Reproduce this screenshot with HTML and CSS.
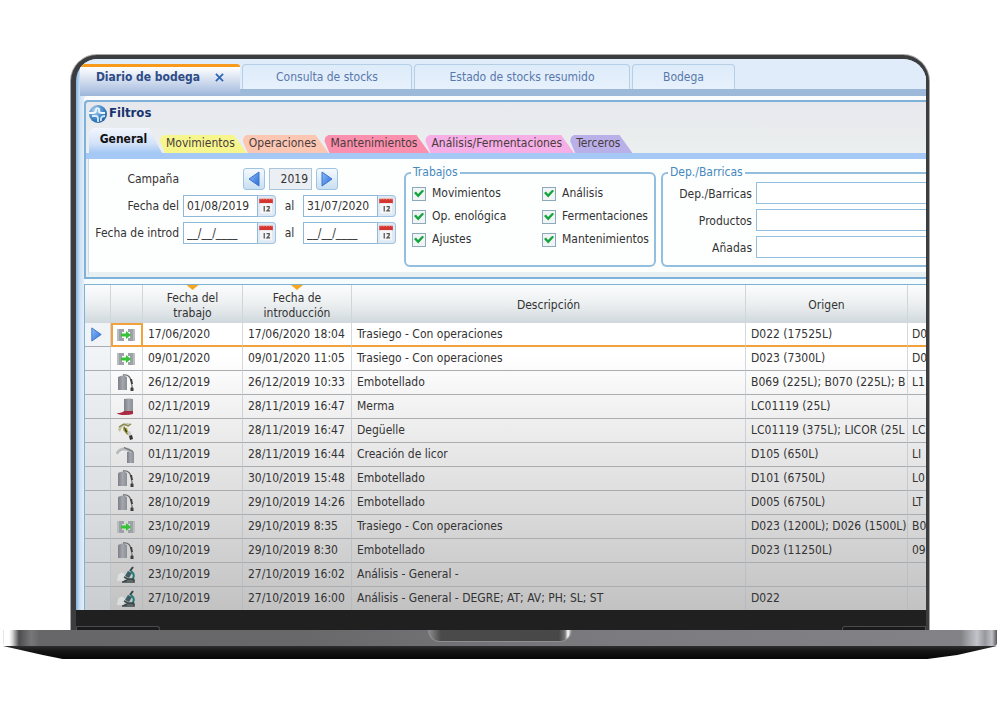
FILE: index.html
```html
<!DOCTYPE html>
<html lang="es">
<head>
<meta charset="utf-8">
<title>Diario de bodega</title>
<link rel="stylesheet" href="styles.css">
</head>
<body>
<svg class="defs" aria-hidden="true">
  <defs>
    <linearGradient id="steel" x1="0" x2="1" y1="0" y2="0"><stop offset="0" stop-color="#7c7f87"/><stop offset=".5" stop-color="#a4a6ae"/><stop offset="1" stop-color="#8d8f97"/></linearGradient>
    <linearGradient id="blue" x1="0" x2="1" y1="0" y2="1"><stop offset="0" stop-color="#8fc0f8"/><stop offset="1" stop-color="#2a6ad8"/></linearGradient>
    <radialGradient id="ball" cx=".35" cy=".3" r=".8"><stop offset="0" stop-color="#b8d8f2"/><stop offset=".5" stop-color="#4a90cc"/><stop offset="1" stop-color="#1c5a9e"/></radialGradient>
    <symbol id="i-transfer" viewBox="0 0 20 18">
      <path d="M1 3h7v3H6v6h2v3H1zM19 3h-7v3h2v6h-2v3h7z" fill="#9da2a6"/>
      <path d="M1 3h2v12H1zM17 3h2v12h-2z" fill="#b9bdc0"/>
      <path d="M5 7.500h5V5l5 4-5 4v-2.500H5z" fill="#35c235"/>
    </symbol>
    <symbol id="i-bottle" viewBox="0 0 20 18">
      <path d="M2 3q5-3 9 0v13H2z" fill="url(#steel)"/>
      <path d="M7 1q7-1 8 6" fill="none" stroke="#6b6d70" stroke-width="1.3"/>
      <path d="M14 5h2l1 5h-2zM14.500 14q1.500-2 3 0v3h-3z" fill="#3c3e40"/>
      <path d="M15.500 10l1 4" stroke="#777" stroke-width="1.2"/>
    </symbol>
    <symbol id="i-loss" viewBox="0 0 20 18">
      <path d="M8 1q5-1 9 0v13H8z" fill="url(#steel)"/>
      <path d="M8 13h9v3q-3 1-8 1-7 0-8-2 5 0 7-2z" fill="#a92a43"/>
    </symbol>
    <symbol id="i-disgorge" viewBox="0 0 20 18">
      <path d="M2 8q1-6 6-6l3-1 5 1-4 1-6 2-2 5z" fill="#c4c0a8"/>
      <path d="M3 5l5-3 4 2 3-2" fill="none" stroke="#878448" stroke-width="1.2"/>
      <path d="M7 5l4 1 2 6-2 1-4-5z" fill="#a9a83a"/>
      <path d="M8 4l5 9-4-4z" fill="#333"/>
      <path d="M11 10l3-1 2 5-3 1z" fill="#c9c9c4"/>
      <path d="M13 14l3-1 1 4-3 1z" fill="#333"/>
    </symbol>
    <symbol id="i-liquor" viewBox="0 0 20 18">
      <path d="M11 6q3-2 7 0v11h-7z" fill="url(#steel)"/>
      <path d="M1 8q2-5 8-5 4 0 7 3" fill="none" stroke="#b8babc" stroke-width="3"/>
      <path d="M3 8l4-3" stroke="#f2f2f2" stroke-width="1.5"/>
      <path d="M8 1.500l9 4" stroke="#6a6c6e" stroke-width="1.3"/>
    </symbol>
    <symbol id="i-scope" viewBox="0 0 20 18">
      <path d="M2 9q4-5 7 0l-1 6H1z" fill="#e6e8e8" opacity=".7"/>
      <path d="M17 1l-3 4" stroke="#364446" stroke-width="2"/>
      <path d="M12 5l4 2-3 5-4-2z" fill="#3c5e62"/>
      <path d="M15 5q5 4 1 9" fill="none" stroke="#1c7c77" stroke-width="2"/>
      <path d="M8 11l4 2h6M7 16l4-2h7v2H6" stroke="#3c484a" stroke-width="1.6" fill="none"/>
    </symbol>
    <symbol id="i-cal" viewBox="0 0 18 22">
      <path d="M1 3h15v5H1z" fill="#d4352f"/>
      <path d="M3 2v2M6 2v2M9 2v2M12 2v2M15 2v2" stroke="#f4b8b0" stroke-width="1"/>
      <path d="M2 8h13v11H2z" fill="#f6f6f8"/>
      <path d="M6.500 11v6M9 11.600h3v2L9.500 16.400H13" fill="none" stroke="#555" stroke-width="1.400"/>
    </symbol>
    <symbol id="i-right" viewBox="0 0 14 16"><path d="M2 1l10 7-10 7z" fill="url(#blue)" stroke="#3c74cc"/></symbol>
    <symbol id="i-left" viewBox="0 0 14 16"><path d="M12 1L2 8l10 7z" fill="url(#blue)" stroke="#3c74cc"/></symbol>
  </defs>
</svg>

<main class="laptop">
  <div class="lid">
    <div class="app">
      <nav class="views">
        <a class="view view--active" href="#diario"><span>Diario de bodega</span>
          <svg class="close" viewBox="0 0 10 10"><path d="M1 1l8 8M9 1L1 9" stroke="#2f67b4" stroke-width="2"/></svg></a>
        <a class="view view--stocks" href="#stocks">Consulta de stocks</a>
        <a class="view view--summary" href="#resumido">Estado de stocks resumido</a>
        <a class="view view--cellar" href="#bodega">Bodega</a>
      </nav>

      <section class="filters">
        <h2 class="filters-title">
          <svg class="ball" viewBox="0 0 18 18"><circle cx="9" cy="9" r="9" fill="url(#ball)"/><path d="M0 8h4q3 0 3-3t3-1v2q0 2 3 2h3" fill="none" stroke="#eef6fc" stroke-width="1.800"/><path d="M3 11h4q2 0 2 3v3M12 16q-1-5 4-5" fill="none" stroke="#d6e9f8" stroke-width="1.800"/></svg>
          Filtros
        </h2>
        <div class="tabs">
          <button class="tab tab--active">General</button>
          <button class="tab tab--yellow">Movimientos</button>
          <button class="tab tab--salmon">Operaciones</button>
          <button class="tab tab--red">Mantenimientos</button>
          <button class="tab tab--pink">Análisis/Fermentaciones</button>
          <button class="tab tab--violet">Terceros</button>
        </div>
        <form class="form">
          <div class="dates">
            <div class="line">
              <label class="name name--year" for="year">Campaña</label>
              <button class="step" type="button" aria-label="Anterior"><svg><use href="#i-left"/></svg></button>
              <input class="year" id="year" value="2019">
              <button class="step" type="button" aria-label="Siguiente"><svg><use href="#i-right"/></svg></button>
            </div>
            <div class="line">
              <label class="name" for="d1">Fecha del</label>
              <span class="date"><input id="d1" value="01/08/2019"><button type="button" aria-label="Calendario"><svg><use href="#i-cal"/></svg></button></span>
              <label class="to" for="d2">al</label>
              <span class="date"><input id="d2" value="31/07/2020"><button type="button" aria-label="Calendario"><svg><use href="#i-cal"/></svg></button></span>
            </div>
            <div class="line">
              <label class="name" for="d3">Fecha de introd</label>
              <span class="date"><input id="d3" value="__/__/____"><button type="button" aria-label="Calendario"><svg><use href="#i-cal"/></svg></button></span>
              <label class="to" for="d4">al</label>
              <span class="date"><input id="d4" value="__/__/____"><button type="button" aria-label="Calendario"><svg><use href="#i-cal"/></svg></button></span>
            </div>
          </div>
          <fieldset class="group jobs">
            <legend>Trabajos</legend>
            <label><input type="checkbox" checked>Movimientos</label>
            <label><input type="checkbox" checked>Análisis</label>
            <label><input type="checkbox" checked>Op. enológica</label>
            <label><input type="checkbox" checked>Fermentaciones</label>
            <label><input type="checkbox" checked>Ajustes</label>
            <label><input type="checkbox" checked>Mantenimientos</label>
          </fieldset>
          <fieldset class="group tanks">
            <legend>Dep./Barricas</legend>
            <label for="t1">Dep./Barricas</label><input id="t1">
            <label for="t2">Productos</label><input id="t2">
            <label for="t3">Añadas</label><input id="t3">
          </fieldset>
        </form>
      </section>

      <table class="log">
        <colgroup><col class="c-mark"><col class="c-icon"><col class="c-date"><col class="c-time"><col><col class="c-origin"><col class="c-target"></colgroup>
        <thead>
          <tr><th></th><th></th><th class="sorted">Fecha del<br>trabajo</th><th class="sorted">Fecha de<br>introducción</th><th>Descripción</th><th>Origen</th><th></th></tr>
        </thead>
        <tbody>
          <tr class="current"><td><svg class="marker"><use href="#i-right"/></svg></td><td><svg><use href="#i-transfer"/></svg></td><td>17/06/2020</td><td>17/06/2020 18:04</td><td>Trasiego - Con operaciones</td><td>D022 (17525L)</td><td>D0</td></tr>
          <tr><td></td><td><svg><use href="#i-transfer"/></svg></td><td>09/01/2020</td><td>09/01/2020 11:05</td><td>Trasiego - Con operaciones</td><td>D023 (7300L)</td><td>D0</td></tr>
          <tr><td></td><td><svg><use href="#i-bottle"/></svg></td><td>26/12/2019</td><td>26/12/2019 10:33</td><td>Embotellado</td><td>B069 (225L); B070 (225L); B</td><td>L1</td></tr>
          <tr><td></td><td><svg><use href="#i-loss"/></svg></td><td>02/11/2019</td><td>28/11/2019 16:47</td><td>Merma</td><td>LC01119 (25L)</td><td></td></tr>
          <tr><td></td><td><svg><use href="#i-disgorge"/></svg></td><td>02/11/2019</td><td>28/11/2019 16:47</td><td>Degüelle</td><td>LC01119 (375L); LICOR (25L</td><td>LC</td></tr>
          <tr><td></td><td><svg><use href="#i-liquor"/></svg></td><td>01/11/2019</td><td>28/11/2019 16:44</td><td>Creación de licor</td><td>D105 (650L)</td><td>LI</td></tr>
          <tr><td></td><td><svg><use href="#i-bottle"/></svg></td><td>29/10/2019</td><td>30/10/2019 15:48</td><td>Embotellado</td><td>D101 (6750L)</td><td>L0</td></tr>
          <tr><td></td><td><svg><use href="#i-bottle"/></svg></td><td>28/10/2019</td><td>29/10/2019 14:26</td><td>Embotellado</td><td>D005 (6750L)</td><td>LT</td></tr>
          <tr><td></td><td><svg><use href="#i-transfer"/></svg></td><td>23/10/2019</td><td>29/10/2019 8:35</td><td>Trasiego - Con operaciones</td><td>D023 (1200L); D026 (1500L)</td><td>B0</td></tr>
          <tr><td></td><td><svg><use href="#i-bottle"/></svg></td><td>09/10/2019</td><td>29/10/2019 8:30</td><td>Embotellado</td><td>D023 (11250L)</td><td>09</td></tr>
          <tr><td></td><td><svg><use href="#i-scope"/></svg></td><td>23/10/2019</td><td>27/10/2019 16:02</td><td>Análisis - General -</td><td></td><td></td></tr>
          <tr><td></td><td><svg><use href="#i-scope"/></svg></td><td>27/10/2019</td><td>27/10/2019 16:00</td><td>Análisis - General - DEGRE; AT; AV; PH; SL; ST</td><td>D022</td><td></td></tr>
        </tbody>
      </table>
    </div>
    <div class="hinge"><span></span><span></span></div>
  </div>
  <div class="deck"><div class="notch"></div></div>
  <div class="under"></div>
</main>
</body>
</html>
```
FILE: styles.css
```css
* { box-sizing: border-box; }
body { margin: 0; background: #fff; color: #333; font: 12px/15px "DejaVu Sans Condensed", "DejaVu Sans", sans-serif; font-stretch: condensed; }
button, input { font: inherit; color: inherit; padding: 0; margin: 0; }
a { color: inherit; text-decoration: none; }
.defs { position: absolute; width: 0; height: 0; }

/* laptop frame */
.laptop { padding: 55px 3px 0; }
.lid { margin: 0 68px; border: solid #3c3d3f; border-width: 4px 3px 0 5px; border-radius: 26px 26px 0 0; overflow: hidden; background: #202020; box-shadow: 0 0 0 1px #a8a8aa; }
.hinge { display: flex; justify-content: space-between; align-items: flex-end; height: 20px; background: #202020; }
.hinge span { width: 84px; height: 4px; border: 1px solid #4b4b4e; border-bottom: 0; border-radius: 0 3px 0 0; background: #1a1a1a; }
.hinge span:last-child { border-radius: 3px 0 0 0; }
.deck { position: relative; display: flex; justify-content: center; height: 16px; background: linear-gradient(90deg, #ccc 0, #fff 1px, #fff 6px, #ddd 9px, #4d4d50 16px, #77777a 28px, #67676a 36px, #68686b 30%, #7b7b7f 60%, #838387 calc(100% - 36px), #c3c4ca calc(100% - 20px), #97989d calc(100% - 12px), #c0c0c5 calc(100% - 5px), #55555a 100%); border-radius: 0 0 3px 3px; }
.notch { width: 144px; height: 12px; border-radius: 0 0 12px 12px; border: 1px solid #8f8f92; border-top: 0; background: linear-gradient(90deg, #8a8a8c 0, #4a4a4b 12px, #484849 calc(100% - 12px), #777 calc(100% - 6px), #fff calc(100% - 3px), #999 100%); }
.under { height: 13px; background: linear-gradient(#2e2e30, #141414 40%, #060606); clip-path: polygon(0 0, 100% 0, 96% 70%, 93% 100%, 6% 100%, 4% 70%); }

/* application */
.app { padding-left: 8px; padding-top: 5px; background: linear-gradient(90deg, #86b2dd 0, #cfe2f5 4px, #e3eefa 8px); }
.views { display: flex; gap: 2px; height: 32px; margin-left: -4px; border-bottom: 7px solid #9db9da; background: #e0ecf9; box-shadow: 0 -6px 0 #e0ecf9; color: #5878ac; }
.view { display: flex; align-items: center; justify-content: center; border: 1px solid #b4cfe6; border-bottom: 0; border-radius: 4px 4px 0 0; background: linear-gradient(#deebf9, #e6f1fc); }
.view--active { width: 160px; gap: 15px; margin-bottom: -7px; padding-bottom: 8px; border: 0; border-top: 3px solid #f79a1e; border-radius: 3px 3px 0 0; background: linear-gradient(#fff, #c6d4ea 60%, #9db6da); color: #2d4b86; font-weight: bold; }
.view--stocks { width: 170px; }
.view--summary { width: 216px; }
.view--cellar { width: 103px; }
.close { width: 9px; height: 9px; }

.filters { margin-top: 4px; border: 2px solid #7fb2d8; border-right: 0; border-radius: 4px 0 0 0; background: linear-gradient(#e6e8ee, #ecefee 52px); box-shadow: 0 -4px 0 #fafcfe; }
.filters-title { display: flex; align-items: center; gap: 2px; height: 26px; margin: 0; padding: 0 0 6px 3px; color: #17366f; font-size: 13px; font-weight: bold; }
.ball { width: 18px; height: 18px; margin-top: 3px; }
.tabs { display: flex; align-items: flex-end; height: 31px; padding-left: 3px; border-bottom: 6px solid #a5c8f4; }
.tab { height: 18px; margin-right: -4px; padding: 0 12px 2px 6px; border: 0; white-space: nowrap; color: #4a3c3c; clip-path: polygon(0 6px, 1px 2px, 4px 0, calc(100% - 13px) 0, 100% 100%, 5px 100%); }
.tab--active { width: 75px; height: 31px; margin-bottom: -6px; padding: 0 6px 8px 0; background: linear-gradient(#f2f6fd, #d3e2f8 50%, #a5c8f4 80%); clip-path: polygon(0 6px, 1px 2px, 5px 0, calc(100% - 15px) 0, calc(100% - 2px) 25px, 100% 100%, 0 100%); color: #111; font-weight: bold; }
.tab--yellow { background: #f7f68c; }
.tab--salmon { background: #fbc6b2; }
.tab--red { background: #fb8fae; }
.tab--pink { background: #f6aee6; }
.tab--violet { background: #b9b0ea; }

.form { display: flex; gap: 5px; height: 118px; margin-left: 2px; border-left: 1px solid #c5dcee; border-bottom: 5px solid #e8f0f2; background: #fdfefe; }
.dates { display: flex; flex-direction: column; gap: 5px; width: 310px; padding-top: 9px; }
.line { display: flex; align-items: center; height: 22px; }
.name { width: 90px; margin-right: 4px; text-align: right; white-space: nowrap; }
.name--year { margin-right: 64px; }
.step { display: flex; align-items: center; justify-content: center; width: 22px; height: 22px; border: 1px solid #9fc3e0; border-radius: 3px; background: linear-gradient(#f4f9fe, #c8dff2); }
.step svg { width: 14px; height: 16px; }
.year { width: 43px; height: 22px; margin: 0 4px; padding-right: 3px; border: 1px solid #a9c6dc; background: #ebeef2; text-align: right; }
.date { display: flex; }
.date input { width: 75px; height: 22px; padding-left: 3px; border: 1px solid #8fb9d8; background: #fff; }
.date button { width: 18px; height: 22px; border: 1px solid #9fc3e0; border-left: 0; border-radius: 0 4px 4px 0; background: #dfeaf4; }
.date svg { display: block; width: 17px; height: 20px; }
.to { width: 27px; text-align: center; }

.group { margin: 6px 0 0; height: 102px; min-width: 0; padding: 0 0 0 6px; border: 2px solid #93bedd; border-radius: 6px; }
.group legend { height: 15px; margin-left: -1px; padding: 0 2px; color: #4689be; }
.jobs { display: grid; grid-template-columns: 130px 1fr; grid-auto-rows: 23px; width: 252px; padding-top: 2px; }
.jobs label { display: flex; align-items: center; gap: 6px; white-space: nowrap; }
.jobs input { appearance: none; display: grid; place-items: center; width: 14px; height: 14px; border: 1px solid #8caabc; background: #f0f4f4; }
.jobs input:checked::before { content: ""; width: 10px; height: 8px; background: #12a53c; clip-path: polygon(0 45%, 20% 25%, 40% 55%, 85% 0, 100% 20%, 42% 100%); }
.tanks { flex: 1; display: grid; grid-template-columns: 83px 1fr; grid-auto-rows: 27px; column-gap: 4px; border-right: 0; border-radius: 6px 0 0 6px; padding-top: 2px; }
.tanks label { padding-top: 5px; text-align: right; white-space: nowrap; }
.tanks input { width: 100%; min-width: 0; height: 22px; border: 1px solid #93bedd; border-right: 0; background: #fff; }

/* work log */
.log { width: 100%; margin-top: 5px; table-layout: fixed; border-collapse: separate; border-spacing: 0; border: 1px solid #7fb2d0; border-width: 1px 0 0 1px; background: linear-gradient(#fff 0, #fff 70px, #f0f0f1 130px, #dededf 210px, #c2c2c3 100%); box-shadow: 0 -5px 0 #f6fbfd; }
.c-mark { width: 26px; } .c-icon { width: 32px; } .c-date { width: 100px; } .c-time { width: 109px; } .c-origin { width: 162px; } .c-target { width: 18px; }
.log th, .log td { overflow: hidden; white-space: nowrap; border-right: 1px solid #aeb4b880; }
.log th { position: relative; height: 38px; padding: 3px 0 0; font-weight: normal; border-color: #cdd6dc; background: linear-gradient(#fbfcfd, #eceff0 50%, #d0d8dd); }
.sorted::before { content: ""; position: absolute; top: 0; left: calc(50% - 6px); width: 12px; height: 5px; background: #f9a51e; clip-path: polygon(0 0, 100% 0, 50% 100%); }
.log td { height: 24px; padding: 0 0 0 5px; border-bottom: 1px solid #aaadaf; }
.log tr:last-child td { height: 23px; border-bottom: 0; }
.log td:first-child { padding-left: 4px; background: #d9e2e860; }
.log td:nth-child(2) { padding-left: 5px; }
.log td svg { display: block; width: 20px; height: 18px; }
.log td .marker { width: 15px; height: 15px; }
.log th:last-child, .log td:last-child { border-right: 0; padding-left: 4px; }
.log .current td { border-bottom: 2px solid #f2a23c; }
.log .current td:first-child { border-bottom: 1px solid #aaadaf; }
.log .current td:nth-child(2) { padding-left: 3px; border: 2px solid #f2a23c; }
```
